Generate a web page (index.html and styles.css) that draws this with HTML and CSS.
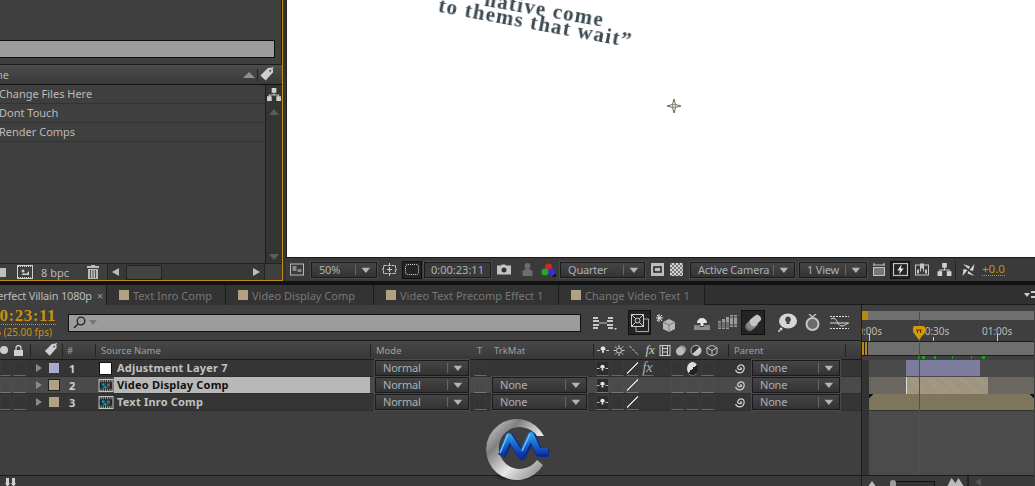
FILE: index.html
```html
<!DOCTYPE html>
<html lang="en">
<head>
<meta charset="utf-8">
<title>After Effects</title>
<link rel="stylesheet" href="styles.css">
</head>
<body>
<svg class="defs" width="0" height="0">
  <defs>
    <symbol id="dd" viewBox="0 0 24 14"><path d="M1 1v12" stroke="#707070" fill="none"/><path d="M8 4.500h10l-5 6z" fill="#b4b4b4"/></symbol>
    <symbol id="tree" viewBox="0 0 15 14"><path d="M5 0h5v5H5zM0 9h5v5H0zM10 9h5v5h-5zM7 5h1v2h5v2h-1V8H3v1H2V7h5z" fill="#d0d0d0"/></symbol>
    <symbol id="tag" viewBox="0 0 16 16"><path d="M9 1l5-.5.500 5L6.500 14.500 1 9z" fill="#cfcfcf"/><path d="M11 3l4-3" stroke="#cfcfcf" fill="none"/><circle cx="11.500" cy="4" r="1" fill="#444"/></symbol>
    <symbol id="film" viewBox="0 0 16 14"><rect x=".5" y=".5" width="15" height="13" fill="#222" stroke="#cfcfcf"/><path d="M1 1.500h14M1 3h14M1 11h14M1 12.500h14" stroke="#cfcfcf" stroke-dasharray="1 1"/><rect x="3" y="4" width="10" height="6" fill="#0f3a5c"/><circle cx="5" cy="6" r="1.500" fill="#1590c0"/><path d="M4 10l3-3 3 3z" fill="#2da030"/><rect x="9" y="5" width="3" height="3" fill="#c8461c"/></symbol>
    <symbol id="spiral" viewBox="0 0 12 12"><path d="M6 6a1 1 0 0 1 1.500 1A2.500 2.500 0 0 1 3.500 6 3.600 3.600 0 0 1 9.600 4 4.800 4.800 0 0 1 7 10.700 5 5 0 0 1 1.500 8" fill="none" stroke="#d2d2d2" stroke-width="1.200"/></symbol>
    <symbol id="shy" viewBox="0 0 13 9"><path d="M0 4.500h3M10 4.500h3" stroke="#d8d8d8"/><path d="M4 2a2.500 2 0 0 1 5 0v2H7.500v3h-2V4H4z" fill="#e2e2e2"/></symbol>
  </defs>
</svg>

<div class="top">
  <section class="project">
    <div class="project-search"><div class="search-field"></div></div>
    <div class="project-head">
      <span class="head-name">Name</span>
      <span class="sort-up"></span>
      <span class="head-sep"></span>
      <svg class="tag-icon"><use href="#tag"/></svg>
    </div>
    <div class="project-body">
      <ul class="folders">
        <li>Change Files Here</li>
        <li>Dont Touch</li>
        <li>Render Comps</li>
      </ul>
      <div class="scroll-v">
        <svg class="tree-icon"><use href="#tree"/></svg>
        <span class="tri-up"></span>
        <span class="tri-down"></span>
      </div>
    </div>
    <div class="project-foot">
      <span class="folder-bit"></span>
      <svg class="foot-film" viewBox="0 0 16 14"><rect x=".5" y=".5" width="15" height="13" fill="none" stroke="#cfcfcf"/><path d="M1 1.500h14M1 12.500h14" stroke="#cfcfcf" stroke-dasharray="1 1"/><circle cx="6" cy="6" r="1.500" fill="#cfcfcf"/><path d="M4 10l3-2 2 1 3-3v4z" fill="#cfcfcf"/></svg>
      <span class="bpc">8 bpc</span>
      <svg class="trash" viewBox="0 0 12 14"><path d="M4 0h4v1h4v2H0V1h4zM1 4h10v10H1z" fill="#bbb"/><path d="M3.500 5v8M6 5v8M8.500 5v8" stroke="#555"/></svg>
      <div class="scroll-h">
        <span class="tri-left"></span>
        <span class="thumb"></span>
        <span class="tri-right"></span>
      </div>
    </div>
  </section>

  <section class="viewer">
    <div class="canvas">
      <p class="quote quote-a">native come</p>
      <p class="quote quote-b">to thems that wait”</p>
      <svg class="anchor" viewBox="0 0 14 14"><path d="M7 0l1.500 5.500L14 7 8.500 8.500 7 14 5.500 8.500 0 7l5.500-1.500z" fill="#fff" stroke="#6f6650"/><circle cx="7" cy="7" r="1.500" fill="none" stroke="#8d846f"/></svg>
    </div>
    <div class="viewer-bar">
      <svg class="ic ic-snap" viewBox="0 0 14 12"><rect x=".5" y=".5" width="13" height="11" fill="none" stroke="#bbb"/><rect x="2.500" y="2.500" width="4" height="5" fill="#888"/><rect x="7.500" y="5.500" width="4" height="3" fill="#888"/></svg>
      <div class="drop drop-zoom"><span>50%</span><svg class="dd"><use href="#dd"/></svg></div>
      <svg class="ic ic-safe" viewBox="0 0 15 13"><rect x="1.500" y="2.500" width="12" height="8" fill="none" stroke="#ccc" stroke-dasharray="3 1"/><path d="M7.500 4v5M5 6.500h5M7.500 0v2M7.500 11v2M0 6.500h1M14 6.500h1" stroke="#ccc"/></svg>
      <span class="toggle toggle-mask"><span class="dotted"></span></span>
      <span class="time-box">0:00:23:11</span>
      <svg class="ic ic-cam" viewBox="0 0 14 10"><path d="M0 1h4l1-1h3l1 1h5v9H0z" fill="#c4c4c4"/><circle cx="7" cy="5.500" r="2.500" fill="#333"/></svg>
      <svg class="ic ic-person" viewBox="0 0 14 13"><circle cx="7" cy="3" r="3" fill="#6d6d6d"/><path d="M2 13V8l3-2h4l3 2v5z" fill="#6d6d6d"/></svg>
      <svg class="ic ic-rgb" viewBox="0 0 15 14"><circle cx="7.500" cy="4" r="3.500" fill="#d22"/><circle cx="4" cy="9" r="3.500" fill="#2a2"/><circle cx="10.500" cy="9" r="3.500" fill="#33c"/><path d="M11 14l4-4v4z" fill="#111"/></svg>
      <div class="drop drop-res"><span>Quarter</span><svg class="dd"><use href="#dd"/></svg></div>
      <svg class="ic ic-roi" viewBox="0 0 13 13"><rect width="13" height="13" fill="#bdbdbd"/><rect x="3" y="4" width="7" height="5" fill="none" stroke="#222" stroke-width="1.500"/></svg>
      <span class="checker"></span>
      <div class="drop drop-cam"><span>Active Camera</span><svg class="dd"><use href="#dd"/></svg></div>
      <div class="drop drop-view"><span>1 View</span><svg class="dd"><use href="#dd"/></svg></div>
      <svg class="ic ic-pixel" viewBox="0 0 12 13"><path d="M1 0v3M11 0v3M0 2h12" stroke="#c4c4c4"/><rect x=".5" y="4.500" width="11" height="8" fill="#777" stroke="#c4c4c4"/></svg>
      <span class="toggle toggle-fast"><svg viewBox="0 0 14 12"><rect x=".5" y=".5" width="13" height="11" fill="none" stroke="#ccc"/><path d="M8 1L4 7h2.500L5.500 11 10 5H7.500z" fill="#e0e0e0"/></svg></span>
      <svg class="ic ic-tl" viewBox="0 0 14 12"><rect x=".5" y="1.500" width="13" height="10" fill="none" stroke="#c4c4c4"/><path d="M5 0h4v8H8V5H6v3H5zM2 6h2v4H2zM10 6h2v4h-2z" fill="#c4c4c4"/></svg>
      <svg class="ic ic-flow"><use href="#tree"/></svg>
      <span class="bar-sep"></span>
      <svg class="ic ic-shutter" viewBox="0 0 15 14"><path d="M7.500 6L2 1l7 2.500zM8.500 7l5-6-1.500 7zM7.500 8l6 5-7-2.500zM6.500 7l-5 6 1-7z" fill="#d8d8d8"/></svg>
      <span class="exposure">+0.0</span>
    </div>
  </section>
</div>

<div class="band"></div>

<nav class="tabs">
  <div class="tab tab-active"><span>Perfect Villain 1080p</span><span class="tab-x">×</span></div>
  <div class="tab tab-2"><span class="swatch"></span><span>Text Inro Comp</span></div>
  <div class="tab tab-3"><span class="swatch"></span><span>Video Display Comp</span></div>
  <div class="tab tab-4"><span class="swatch"></span><span>Video Text Precomp Effect 1</span></div>
  <div class="tab tab-5"><span class="swatch"></span><span>Change Video Text 1</span></div>
  <div class="tab-rest"><span class="menu-tri"></span><span class="panel-menu"></span></div>
</nav>

<main class="timeline">
  <div class="layers">
    <div class="tools">
      <div class="timecode">
        <div class="tc-main">0:00:23:11</div>
        <div class="tc-fps">00586 (25.00 fps)</div>
      </div>
      <div class="tl-search">
        <svg class="lens" viewBox="0 0 13 13"><circle cx="8" cy="5" r="3.800" fill="none" stroke="#222" stroke-width="1.300"/><path d="M5 8l-4 4" stroke="#222" stroke-width="1.500"/></svg>
        <span class="lens-tri"></span>
      </div>
      <svg class="tool t-mini" viewBox="0 0 24 14"><path d="M0 1h5v2H0zM0 4h6v2H0zM0 8h6v2H0zM0 11h5v2H0zM20 1h-5v2h5zM20 4h-6v2h6zM20 8h-6v2h6zM20 11h-5v2h5z" fill="#c8c8c8"/><path d="M6 7h8" stroke="#c8c8c8"/><path d="M21 12h3l-1.500 2z" fill="#ccc"/></svg>
      <span class="toggle t-comp"><svg viewBox="0 0 18 18"><rect x=".5" y=".5" width="12" height="12" fill="none" stroke="#ccc"/><path d="M1 1l11 11M12 1L1 12" stroke="#ccc"/><circle cx="6.500" cy="6.500" r="2.500" fill="#333" stroke="#ccc"/><path d="M13 5h4.500v12.500H5V13" fill="none" stroke="#aaa"/></svg></span>
      <svg class="tool t-3d" viewBox="0 0 19 18"><path d="M3 0v8M0 4h7M1 1l5 6M6 1L1 7" stroke="#e8e8e8"/><path d="M13 5l6 3v7l-6 3-6-3V8z" fill="#b8b8b8"/><path d="M7 8l6 3 6-3M13 11v7" fill="none" stroke="#777"/></svg>
      <svg class="tool t-hide" viewBox="0 0 16 14"><path d="M3 7a5 5 0 0 1 10 0H9.500v3h-3V7z" fill="#e4e4e4"/><path d="M0 10h6M10 10h6" stroke="#ccc"/><rect y="11" width="16" height="3" fill="#8e8e8e"/></svg>
      <svg class="tool t-frames" viewBox="0 0 19 16"><path d="M0 6h3v8H0zM4 4h3v10H4zM8 2h3v12H8zM12 0h7v12h-7z" fill="#9a9a9a"/><path d="M0 8h11M0 10h11M0 12h11M12 2h7M12 10h7M15.500 0v12" stroke="#444"/></svg>
      <span class="toggle t-motion"><svg viewBox="0 0 20 18"><path d="M2 12l8-8 3 9-5 4c-3 1-6-2-6-5z" fill="#6e6e6e"/><path d="M3 10l8-8 4 9-5 4c-3 1-7-2-7-5z" fill="#878787"/><path d="M7 6l6-5c2-1 6 2 5 5l-6 6c-3 1-6-2-5-6z" fill="#c4c4c4"/></svg></span>
      <svg class="tool t-bulb" viewBox="0 0 19 19"><ellipse cx="10" cy="8" rx="9" ry="7.500" fill="#d6d6d6"/><path d="M10 3.500a3 3 0 0 1 1.500 5.500v2h-3V9A3 3 0 0 1 10 3.500z" fill="#444"/><circle cx="3" cy="16" r="1.500" fill="#d6d6d6"/><circle cx="1" cy="18" r="1" fill="#d6d6d6"/></svg>
      <svg class="tool t-watch" viewBox="0 0 15 17"><path d="M4 0l3.500 3L11 0" fill="none" stroke="#bbb" stroke-width="1.500"/><circle cx="7.500" cy="10" r="6" fill="#6a6a6a" stroke="#c4c4c4" stroke-width="2"/></svg>
      <svg class="tool t-graph" viewBox="0 0 19 15"><path d="M0 1.500h19M0 13.500h19" stroke="#ddd" stroke-dasharray="2 1"/><path d="M1 4c3-2 5 0 7 4s5 4 10 0M0 8h19" fill="none" stroke="#ddd"/></svg>
    </div>

    <div class="layer-head">
      <div class="hd hd-sw"><span class="dot"></span><svg class="lock" viewBox="0 0 9 11"><path d="M2 5V3a2.500 2.500 0 0 1 5 0v2" fill="none" stroke="#d0d0d0" stroke-width="1.300"/><rect y="5" width="9" height="6" fill="#d0d0d0"/></svg></div>
      <div class="hd hd-tag"><svg class="hd-tagicon"><use href="#tag"/></svg></div>
      <div class="hd hd-num">#</div>
      <div class="hd hd-name">Source Name</div>
      <div class="hd hd-mode">Mode</div>
      <div class="hd hd-t">T</div>
      <div class="hd hd-trk">TrkMat</div>
      <div class="hd hd-icons">
        <svg class="hi" viewBox="0 0 13 9"><use href="#shy"/></svg>
        <svg class="hi" viewBox="0 0 11 11"><circle cx="5.500" cy="5.500" r="2.500" fill="none" stroke="#ccc"/><path d="M5.500 0v2.500M5.500 8.500V11M0 5.500h2.500M8.500 5.500H11M1.500 1.500l2 2M7.500 7.500l2 2M9.500 1.500l-2 2M3.500 7.500l-2 2" stroke="#ccc"/></svg>
        <svg class="hi" viewBox="0 0 11 11"><path d="M1 1l9 9" stroke="#ccc" stroke-dasharray="3 1"/></svg>
        <span class="hi-fx">fx</span>
        <svg class="hi" viewBox="0 0 11 11"><rect x=".5" y=".5" width="10" height="10" fill="none" stroke="#ccc"/><path d="M3 0v11M8 0v11M3 3.500h5M3 7h5" stroke="#ccc"/></svg>
        <svg class="hi" viewBox="0 0 12 12"><circle cx="7" cy="5" r="4.500" fill="#9c9c9c"/><circle cx="5" cy="7" r="4.500" fill="#bbb"/></svg>
        <svg class="hi" viewBox="0 0 12 12"><circle cx="6" cy="6" r="5.500" fill="#333" stroke="#ccc"/><path d="M6 .5a5.500 5.500 0 0 1 0 11z" fill="#ccc" transform="rotate(45 6 6)"/></svg>
        <svg class="hi" viewBox="0 0 12 12"><path d="M6 0l5.500 3v6L6 12 .5 9V3z" fill="none" stroke="#ccc"/><path d="M.5 3L6 6l5.500-3M6 6v6" fill="none" stroke="#ccc"/></svg>
      </div>
      <div class="hd hd-parent">Parent</div>
    </div>

    <div class="row">
      <span class="sw sw1"></span><span class="sw sw2"></span>
      <span class="arrow"></span>
      <span class="label label-adj"></span>
      <span class="num">1</span>
      <span class="src"><span class="solid"></span></span>
      <span class="name">Adjustment Layer 7</span>
      <div class="drop c-mode"><span>Normal</span><svg class="dd"><use href="#dd"/></svg></div>
      <span class="sw c-t"></span>
      <span class="c-trk"></span>
      <div class="switches">
        <span class="sw s-shy"><svg><use href="#shy"/></svg></span>
        <span class="sw"></span>
        <span class="sw s-q"></span>
        <span class="sw s-fx">fx</span>
      </div>
      <div class="modes"><span class="sw"></span><span class="sw s-half"></span><span class="sw"></span></div>
      <svg class="spiral"><use href="#spiral"/></svg>
      <div class="drop c-parent"><span>None</span><svg class="dd"><use href="#dd"/></svg></div>
    </div>

    <div class="row row-sel">
      <span class="sw sw1"></span><span class="sw sw2"></span>
      <span class="arrow"></span>
      <span class="label label-comp label-out"></span>
      <span class="num">2</span>
      <span class="src"><svg class="comp-ic"><use href="#film"/></svg></span>
      <span class="name">Video Display Comp</span>
      <div class="drop c-mode"><span>Normal</span><svg class="dd"><use href="#dd"/></svg></div>
      <span class="sw c-t"></span>
      <div class="drop c-trk"><span>None</span><svg class="dd"><use href="#dd"/></svg></div>
      <div class="switches">
        <span class="sw s-shy"><svg><use href="#shy"/></svg></span>
        <span class="sw"></span>
        <span class="sw s-q"></span>
        <span class="s-none"></span>
      </div>
      <div class="modes"><span class="sw"></span><span class="sw"></span><span class="sw"></span></div>
      <svg class="spiral"><use href="#spiral"/></svg>
      <div class="drop c-parent"><span>None</span><svg class="dd"><use href="#dd"/></svg></div>
    </div>

    <div class="row">
      <span class="sw sw1"></span><span class="sw sw2"></span>
      <span class="arrow"></span>
      <span class="label label-comp"></span>
      <span class="num">3</span>
      <span class="src"><svg class="comp-ic"><use href="#film"/></svg></span>
      <span class="name">Text Inro Comp</span>
      <div class="drop c-mode"><span>Normal</span><svg class="dd"><use href="#dd"/></svg></div>
      <span class="sw c-t"></span>
      <div class="drop c-trk"><span>None</span><svg class="dd"><use href="#dd"/></svg></div>
      <div class="switches">
        <span class="sw s-shy"><svg><use href="#shy"/></svg></span>
        <span class="sw"></span>
        <span class="sw s-q"></span>
        <span class="s-none"></span>
      </div>
      <div class="modes"><span class="sw"></span><span class="sw"></span><span class="sw"></span></div>
      <svg class="spiral"><use href="#spiral"/></svg>
      <div class="drop c-parent"><span>None</span><svg class="dd"><use href="#dd"/></svg></div>
    </div>
    <div class="layers-empty"></div>
    <div class="layers-foot"><svg class="foot-arrows" viewBox="0 0 11 9"><path d="M1 0h3v5h1L2.500 9 0 5h1zM7 0h3v5h1L8.500 9 6 5h1z" fill="#cfcfcf"/></svg></div>
  </div>

  <div class="track">
    <div class="ruler">
      <div class="work"><span class="work-handle"></span><span class="work-fill"></span></div>
      <div class="ticks">
        <span class="t-label t0"><span>00:00s</span></span>
        <span class="t-label t30">00:30s</span>
        <span class="t-label t60">01:00s</span>
        <span class="tick tk0"></span><span class="tick tk30"></span><span class="tick tk60"></span>
      </div>
      <div class="area"><span class="area-handle"></span></div>
      <div class="cache"><i class="g1"></i><i class="g2"></i><i class="g3"></i><i class="g4"></i><i class="g5"></i><i class="g6"></i></div>
    </div>
    <div class="bars">
      <div class="bar-row"><span class="bar bar-adj"></span></div>
      <div class="bar-row bar-row-2"><span class="bar bar-in"></span></div>
      <div class="bar-row bar-row-3"></div>
      <div class="bars-empty"></div>
    </div>
    <div class="track-foot">
      <svg class="mnt-s" viewBox="0 0 10 7"><path d="M5 0l5 7H0z" fill="#bbb"/></svg>
      <span class="zoom-slider"><span class="zoom-knob"></span></span>
      <svg class="mnt-l" viewBox="0 0 16 8"><path d="M4 0l4 5 3-5 5 8H0z" fill="#bbb"/></svg>
      <span class="foot-sep"></span>
      <span class="foot-tri"></span>
    </div>
    <div class="playhead-line"></div>
    <svg class="playhead" viewBox="0 0 12 14"><path d="M2 0h8q2 0 2 2v4l-6 8-6-8V2q0-2 2-2z" fill="#d69a00"/><path d="M3 4h6M4.500 4v3M7.500 4v3" stroke="#4a3500"/></svg>
  </div>
</main>

<svg class="logo" viewBox="0 0 64 66" aria-label="Logo">
  <defs>
    <linearGradient id="ring" x1="0" y1="0" x2="1" y2="1">
      <stop offset="0" stop-color="#dcdcdc"/><stop offset=".3" stop-color="#808080"/><stop offset=".6" stop-color="#e8e8e8"/><stop offset="1" stop-color="#777"/>
    </linearGradient>
    <linearGradient id="blue" x1="0" y1="0" x2="0" y2="1">
      <stop offset="0" stop-color="#2f98ea"/><stop offset="1" stop-color="#0b33a6"/>
    </linearGradient>
    <radialGradient id="shadow"><stop offset="0" stop-color="#000" stop-opacity=".8"/><stop offset="1" stop-color="#000" stop-opacity="0"/></radialGradient>
  </defs>
  <ellipse cx="28" cy="62" rx="22" ry="4" fill="url(#shadow)"/>
  <path d="M58 21A30.500 30.500 0 1 0 57 50L51 45A21 21 0 1 1 51 21z" fill="url(#ring)"/>
  <path d="M16 41L24 22L36 41L46 21L53 38H63" fill="none" stroke="#0a2c90" stroke-width="8" stroke-linejoin="round"/>
  <path d="M15 40L23 21L35 40L45 20L52 36H62" fill="none" stroke="url(#blue)" stroke-width="6" stroke-linejoin="round"/>
  <path d="M14 38L22 19M36 36L44 19" stroke="#63c4ff" stroke-width="1.500" fill="none"/>
</svg>
</body>
</html>
```
FILE: styles.css
```css
* { box-sizing: border-box; }
html, body { margin: 0; padding: 0; }
body {
  width: 1035px; height: 486px; overflow: hidden; position: relative;
  background: #3f3f3f; color: #b8b8b8;
  font: 11px "Noto Sans", "DejaVu Sans", sans-serif;
}
.defs { position: absolute; }
svg { display: block; }
ul, p { margin: 0; padding: 0; list-style: none; }

/* top */
.top { display: flex; height: 281px; }
.project { width: 283px; height: 281px; background: #3f3f3f; border-right: 1px solid #c08a14; border-bottom: 1px solid #c08a14; display: flex; flex-direction: column; box-shadow: inset -1px 0 0 #1c1c1c; flex: none; }
.project-search { height: 65px; padding: 40px 7px 0 0; border-bottom: 1px solid #1d1d1d; }
.search-field { height: 18px; background: #9c9c9c; border: 1px solid #111; border-left: 0; }
.project-head { height: 20px; display: flex; align-items: center; padding-right: 6px; background: linear-gradient(#4c4c4c, #3a3a3a); border-bottom: 1px solid #111; overflow: hidden; }
.head-name { margin-left: -22px; width: 276px; flex: none; color: #b0b0b0; }
.sort-up { width: 0; height: 0; flex: none; border: 6px solid transparent; border-top: 0; border-bottom: 6px solid #8f8f8f; margin-left: -11px; }
.head-sep { width: 1px; height: 12px; flex: none; background: #222; margin: 0 1px 0 2px; }
.tag-icon { width: 16px; height: 15px; flex: none; }
.project-body { flex: 1; display: flex; min-height: 0; }
.folders { flex: 1; }
.folders li { height: 19px; line-height: 18px; margin-left: -1px; border-bottom: 1px solid #333; color: #bbb; white-space: nowrap; }
.scroll-v { width: 17px; flex: none; border-left: 1px solid #1d1d1d; background: #343434; display: flex; flex-direction: column; align-items: center; padding-top: 3px; }
.tree-icon { width: 14px; height: 13px; margin-bottom: 8px; }
.tri-up { width: 0; height: 0; border: 5px solid transparent; border-top: 0; border-bottom: 6px solid #5c5c5c; }
.tri-down { width: 0; height: 0; border: 5px solid transparent; border-bottom: 0; border-top: 6px solid #5c5c5c; margin-top: auto; margin-bottom: 3px; }
.project-foot { height: 17px; display: flex; align-items: center; background: #3f3f3f; border-top: 1px solid #222; }
.folder-bit { width: 6px; height: 9px; background: #bfbfbf; flex: none; margin-right: 11px; }
.foot-film { width: 16px; height: 14px; flex: none; }
.bpc { margin-left: 8px; width: 46px; flex: none; color: #b8b8b8; }
.trash { width: 12px; height: 14px; flex: none; }
.scroll-h { margin-left: 8px; width: 158px; height: 16px; flex: none; border-left: 1px solid #222; border-right: 1px solid #222; display: flex; align-items: center; background: #383838; }
.tri-left { width: 0; height: 0; border: 4px solid transparent; border-left: 0; border-right: 7px solid #bdbdbd; margin-left: 4px; }
.thumb { width: 36px; height: 15px; background: #444; border: 1px solid #222; margin-left: 7px; }
.tri-right { width: 0; height: 0; border: 4px solid transparent; border-right: 0; border-left: 7px solid #bdbdbd; margin-left: auto; margin-right: 4px; }

.viewer { flex: 1; display: flex; flex-direction: column; padding-left: 3px; background: #333; }
.canvas { height: 257px; background: #fff; position: relative; overflow: hidden; border-left: 1px solid #222; }
.quote { position: absolute; font: bold 21px "Liberation Serif", serif; color: #3c4a52; white-space: nowrap; transform-origin: left top; filter: blur(.45px); letter-spacing: 1.300px; }
.quote-a { left: 200px; top: -13px; transform: rotate(10deg); }
.quote-b { left: 154px; top: -7px; transform: rotate(10.500deg); }
.anchor { position: absolute; left: 380px; top: 99px; width: 14px; height: 14px; }
.viewer-bar { height: 24px; display: flex; align-items: center; background: #3a3a3a; border-top: 1px solid #1a1a1a; padding-left: 4px; }

.ic { flex: none; height: 13px; }
.ic-snap { width: 14px; }
.drop { display: flex; align-items: center; height: 16px; flex: none; border: 1px solid #1a1a1a; background: linear-gradient(#454545, #333); color: #aab0b6; padding-left: 7px; line-height: 14px; letter-spacing: -.2px; box-shadow: 0 0 0 1px #4a4a4a; }
.drop span { flex: 1; white-space: nowrap; }
.dd { width: 22px; height: 12px; flex: none; }
.drop-zoom { width: 66px; margin-left: 7px; }
.ic-safe { width: 15px; margin-left: 5px; }
.toggle { display: flex; align-items: center; justify-content: center; flex: none; background: #242424; border: 1px solid #111; }
.toggle-mask { width: 20px; height: 18px; margin-left: 5px; }
.dotted { width: 14px; height: 11px; border: 1px dotted #ddd; border-radius: 3px; }
.time-box { width: 67px; height: 16px; margin-left: 2px; border: 1px solid #1a1a1a; box-shadow: 0 0 0 1px #4a4a4a; text-align: center; line-height: 14px; background: #3a3a3a; flex: none; color: #aab0b6; }
.ic-cam { width: 14px; margin-left: 6px; }
.ic-person { width: 15px; margin-left: 9px; }
.ic-rgb { width: 15px; margin-left: 6px; height: 14px; }
.drop-res { width: 85px; margin-left: 4px; }
.ic-roi { width: 13px; margin-left: 6px; }
.checker { width: 13px; height: 13px; margin-left: 6px; flex: none; background: repeating-conic-gradient(#d4d4d4 0 25%, #777 0 50%) 0 0 / 4px 4px; }
.drop-cam { width: 105px; margin-left: 7px; }
.drop-view { width: 68px; margin-left: 4px; }
.ic-pixel { width: 14px; margin-left: 5px; }
.toggle-fast { width: 20px; height: 18px; margin-left: 4px; }
.toggle-fast svg { width: 15px; height: 13px; }
.ic-tl { width: 14px; margin-left: 5px; }
.ic-flow { width: 15px; margin-left: 8px; }
.bar-sep { width: 1px; height: 18px; background: #222; margin-left: 3px; flex: none; }
.ic-shutter { width: 15px; height: 14px; margin-left: 5px; }
.exposure { margin-left: 6px; color: #c98f10; border-bottom: 1px dotted #c98f10; line-height: 12px; font-size: 11.500px; }

/* band + tabs */
.band { height: 4px; background: #111; }
.tabs { height: 20px; display: flex; background: #303030; border-bottom: 1px solid #1a1a1a; }
.tab { display: flex; align-items: center; height: 20px; flex: none; background: #333; border-right: 1px solid #1c1c1c; padding-left: 12px; color: #777; gap: 4px; white-space: nowrap; }
.tab-active { width: 107px; background: #3f3f3f; color: #bcbcbc; padding-left: 0; justify-content: flex-end; padding-right: 3px; gap: 5px; overflow: hidden; letter-spacing: -.2px; }
.tab-x { color: #a0a0a0; }
.tab-2 { width: 119px; }
.tab-3 { width: 148px; }
.tab-4 { width: 185px; }
.tab-5 { width: 146px; }
.swatch { width: 10px; height: 10px; background: #b0a183; flex: none; }
.tab-rest { flex: 1; display: flex; justify-content: flex-end; align-items: center; gap: 1px; }
.menu-tri { width: 0; height: 0; border: 3px solid transparent; border-bottom: 0; border-top: 4px solid #ccc; }
.panel-menu { width: 4px; height: 7px; border-top: 2px solid #ccc; border-bottom: 2px solid #ccc; }

/* timeline */
.timeline { display: flex; height: 181px; }
.layers { width: 862px; flex: none; display: flex; flex-direction: column; border-right: 1px solid #1c1c1c; }
.tools { height: 36px; display: flex; align-items: center; border-bottom: 1px solid #1c1c1c; flex: none; }
.timecode { width: 56px; flex: none; display: flex; flex-direction: column; align-items: flex-end; }
.tc-main { font: bold 17px/17px "Liberation Serif", serif; color: #c98f10; border-bottom: 1px dotted #c98f10; letter-spacing: .5px; white-space: nowrap; flex: none; }
.tc-fps { color: #c98f10; font-size: 10px; line-height: 14px; white-space: nowrap; margin-right: 4px; flex: none; }
.tl-search { width: 513px; height: 18px; background: #9c9c9c; border: 1px solid #111; display: flex; align-items: center; padding-left: 4px; gap: 3px; flex: none; margin-left: 12px; }
.lens { width: 13px; height: 13px; }
.lens-tri { width: 0; height: 0; border: 4px solid transparent; border-bottom: 0; border-top: 5px solid #777; }
.tool { flex: none; }
.t-mini { width: 24px; height: 14px; margin-left: 12px; }
.t-comp { width: 23px; height: 25px; margin-left: 11px; }
.t-comp svg { width: 18px; height: 18px; }
.t-3d { width: 19px; height: 18px; margin-left: 5px; }
.t-hide { width: 16px; height: 14px; margin-left: 19px; }
.t-frames { width: 19px; height: 16px; margin-left: 8px; }
.t-motion { width: 24px; height: 25px; margin-left: 4px; }
.t-motion svg { width: 20px; height: 18px; }
.t-bulb { width: 19px; height: 19px; margin-left: 13px; }
.t-watch { width: 15px; height: 17px; margin-left: 8px; }
.t-graph { width: 19px; height: 15px; margin-left: 10px; }

.layer-head { height: 19px; flex: none; display: flex; align-items: center; background: linear-gradient(#484848, #383838); border-bottom: 1px solid #1c1c1c; color: #a0a0a0; font-size: 9.500px; }
.hd { height: 13px; display: flex; align-items: center; flex: none; border-right: 1px solid #222; white-space: nowrap; }
.hd-sw { width: 31px; gap: 6px; }
.dot { width: 8px; height: 8px; border-radius: 50%; background: #ccc; }
.lock { width: 9px; height: 11px; }
.hd-tag { width: 32px; justify-content: flex-end; padding-right: 4px; }
.hd-tagicon { width: 14px; height: 14px; }
.hd-num { width: 33px; padding-left: 4px; }
.hd-name { width: 275px; padding-left: 5px; }
.hd-mode { width: 102px; border: 0; padding-left: 5px; }
.hd-t { width: 17px; border: 0; padding-left: 4px; }
.hd-trk { width: 104px; padding-left: 4px; }
.hd-icons { width: 135px; gap: 3.500px; padding-left: 3px; }
.hi { width: 12px; height: 11px; flex: none; }
.hi-fx { font: italic 13px "Liberation Serif", serif; width: 10px; margin-left: 2px; color: #ccc; flex: none; }
.hd-parent { width: 117px; padding-left: 5px; }

.row { height: 17px; flex: none; display: flex; align-items: center; background: #353535; border-bottom: 1px solid #2e2e2e; }
.row-sel { background: #4a4a4a; }
.sw { flex: none; width: 13px; height: 15px; border: 1px solid #3a3a3a; border-bottom: 1px solid #6a6a6a; display: flex; align-items: center; justify-content: center; }
.row-sel .sw { border-color: #4f4f4f #4f4f4f #777; }
.sw1 { width: 11px; margin-right: 2px; }
.sw2 { width: 13px; }
.arrow { width: 0; height: 0; border: 4px solid transparent; border-right: 0; border-left: 6px solid #8a8a8a; margin-left: 10px; }
.label { width: 10px; height: 10px; margin-left: 7px; flex: none; }
.label-adj { background: #aaaacc; }
.label-comp { background: #b0a183; }
.label-out { outline: 1px solid #222; }
.num { width: 38px; padding-left: 10px; font-weight: 700; color: #cfcfcf; flex: none; }
.src { width: 17px; height: 13px; flex: none; display: flex; justify-content: center; }
.solid { width: 13px; height: 13px; background: #fff; border: 1px solid #111; }
.comp-ic { width: 16px; height: 13px; }
.name { width: 256px; height: 16px; line-height: 15px; flex: none; padding-left: 3px; font-weight: 700; color: #c2c2c2; white-space: nowrap; letter-spacing: .2px; }
.row-sel .name { background: #b8b8b8; color: #111; }
.c-mode { width: 94px; margin-left: 5px; }
.c-t { margin-left: 5px; }
.c-trk { width: 95px; margin-left: 5px; flex: none; }
.switches { display: flex; margin-left: 9px; gap: 2px; width: 60px; flex: none; }
.s-shy { background: #2c2c2c; }
.s-shy svg { width: 13px; height: 9px; }
.s-q { background: linear-gradient(135deg, transparent 44%, #d4d4d4 44%, #d4d4d4 54%, transparent 54%); }
.s-fx { font: italic 14px "Liberation Serif", serif; color: #b4b4b4; }
.s-none { width: 13px; }
.modes { display: flex; gap: 2px; width: 44px; flex: none; margin-left: 15px; }
.s-half { background: linear-gradient(135deg, #ddd 50%, #222 50%); border-radius: 50%; }
.spiral { width: 12px; height: 12px; margin-left: 19px; flex: none; }
.c-parent { width: 88px; margin-left: 6px; }
.layers-empty { flex: 1; }
.layers-foot { height: 11px; flex: none; border-top: 1px solid #1c1c1c; padding-left: 5px; padding-top: 2px; background: #3a3a3a; }
.foot-arrows { width: 11px; height: 9px; }

/* track */
.track { width: 172px; flex: none; position: relative; display: flex; flex-direction: column; background: #3f3f3f; }
.ruler { height: 55px; flex: none; position: relative; }
.work { height: 9px; margin-top: 6px; display: flex; }
.work-handle { width: 6px; background: #b98a10; }
.work-fill { flex: 1; background: #707070; }
.ticks { height: 21px; position: relative; }
.t-label { position: absolute; top: 5px; color: #bbb; font-size: 10px; line-height: 13px; white-space: nowrap; }
.t0 { left: 0; width: 20px; overflow: hidden; display: flex; justify-content: flex-end; }
.t0 span { flex: none; }
.t30 { left: 57px; }
.t60 { left: 120px; }
.tick { position: absolute; width: 1px; background: #ccc; bottom: 0; height: 7px; }
.tk0 { left: 7px; }
.tk30 { left: 71px; height: 4px; }
.tk60 { left: 135px; }
.area { height: 15px; background: #6e6e6e; border: 1px solid #1c1c1c; border-width: 1px 0; }
.area-handle { display: block; width: 6px; height: 13px; background: repeating-linear-gradient(90deg, #b98a10 0 2px, #222 2px 3px); }
.cache { height: 3px; position: relative; background: #3f3f3f; }
.cache i { position: absolute; top: 0; height: 3px; width: 1px; background: #2a9a2a; }
.g1 { left: 56px; } .g2 { left: 60px; width: 3px !important; } .g3 { left: 72px; width: 2px !important; } .g4 { left: 90px; } .g5 { left: 109px; } .g6 { left: 120px; width: 3px !important; }
.bars { flex: 1; padding-left: 7px; display: flex; flex-direction: column; background: #333; }
.bar-row { height: 17px; flex: none; background: #4a4a4a; }
.bar-row-2 { background: #6b675f; }
.bar-row-3 { background: linear-gradient(135deg, #111 0 3px, transparent 3px), linear-gradient(225deg, #111 0 3px, transparent 3px), #7f745c; border-bottom: 1px solid #333; }
.bar { display: block; height: 16px; }
.bar-adj { margin-left: 37px; width: 74px; background: #7c7c9c; }
.bar-in { margin-left: 37px; width: 82px; background: repeating-linear-gradient(45deg, #a59a84 0 1px, #9c917b 1px 2px); border-left: 1px solid #ddd; height: 17px; }
.bars-empty { flex: 1; background: #4b4b4b; }
.track-foot { height: 11px; flex: none; border-top: 1px solid #1c1c1c; display: flex; align-items: flex-end; background: #3a3a3a; overflow: hidden; }
.mnt-s { width: 10px; height: 5px; margin-left: 5px; flex: none; }
.zoom-slider { width: 40px; height: 5px; margin-left: 18px; border: 1px solid #111; border-bottom: 0; position: relative; background: #333; flex: none; }
.zoom-knob { position: absolute; left: -6px; bottom: 0; width: 6px; height: 6px; background: #999; border-radius: 3px 3px 0 0; }
.mnt-l { width: 17px; height: 8px; margin-left: 12px; flex: none; }
.foot-sep { width: 2px; height: 10px; background: #222; margin-left: 3px; flex: none; }
.foot-tri { width: 0; height: 0; border: 4px solid transparent; border-left: 0; border-right: 6px solid #555; margin-left: 6px; }
.playhead-line { position: absolute; left: 57px; top: 7px; bottom: 11px; width: 1px; background: #d01818; }
.playhead { position: absolute; left: 51px; top: 21px; width: 12px; height: 14px; }

.logo { position: absolute; left: 486px; top: 415px; width: 64px; height: 66px; }
```
